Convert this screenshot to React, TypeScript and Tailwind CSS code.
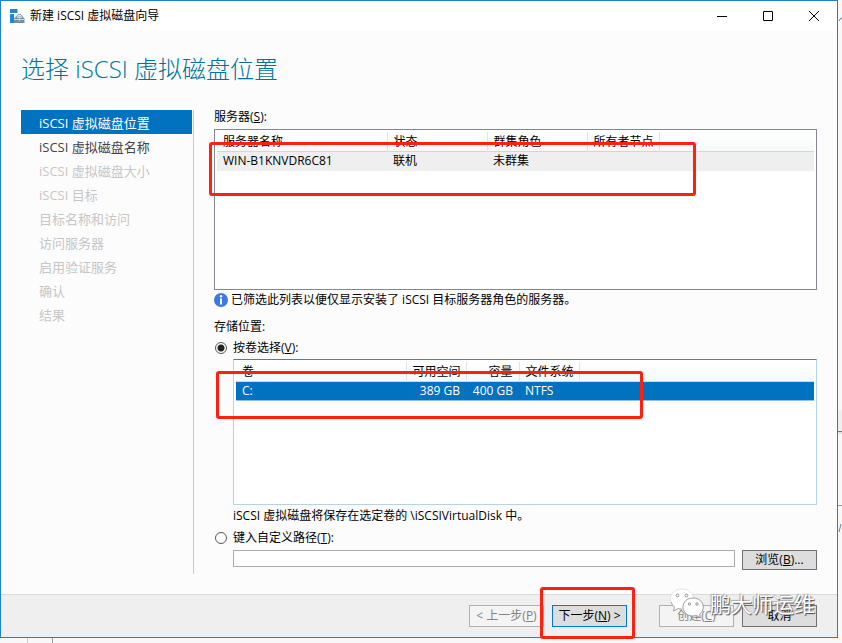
import React, { useState } from 'react';
import clsx from 'clsx';

type StepState = 'current' | 'available' | 'disabled';

const STEPS: { label: string; state: StepState }[] = [
  { label: 'iSCSI 虚拟磁盘位置', state: 'current' },
  { label: 'iSCSI 虚拟磁盘名称', state: 'available' },
  { label: 'iSCSI 虚拟磁盘大小', state: 'disabled' },
  { label: 'iSCSI 目标', state: 'disabled' },
  { label: '目标名称和访问', state: 'disabled' },
  { label: '访问服务器', state: 'disabled' },
  { label: '启用验证服务', state: 'disabled' },
  { label: '确认', state: 'disabled' },
  { label: '结果', state: 'disabled' },
];

const SERVERS = [{ name: 'WIN-B1KNVDR6C81', status: '联机', role: '未群集', owner: '' }];
const VOLUMES = [{ name: 'C:', free: '389 GB', size: '400 GB', fs: 'NTFS' }];

const WizardIcon: React.FC = () => (
  <svg width="15" height="15" viewBox="0 0 15 15" aria-hidden="true">
    <path d="M0 0h7.500v4H0zM0 5h4v9H0z" fill="#1e86d6" />
    <path d="M4 14V9.500l2-2h6.500l2 2V14z" fill="#7291a5" />
    <path d="M6.500 7.500l1.500-1.800h3l1.500 1.800" stroke="#7291a5" fill="none" />
    <path d="M4 10.500h4M11 10.500h3.500M7 8.500h5" stroke="#dfe8ee" strokeWidth="0.800" fill="none" />
    <path d="M8.500 9.500h2v2h-2z" fill="#dfe8ee" />
  </svg>
);

const InfoIcon: React.FC = () => (
  <svg width="14" height="14" viewBox="0 0 14 14" aria-hidden="true" className="shrink-0">
    <circle cx="7" cy="7" r="7" fill="#3f78e0" />
    <circle cx="7" cy="3.300" r="1.200" fill="#fff" />
    <path d="M7 5.500v6" stroke="#fff" strokeWidth="2" />
  </svg>
);

const ChatBubbles: React.FC = () => (
  <svg width="36" height="34" viewBox="0 0 36 34" aria-hidden="true">
    <path d="M13 2C6 2 1.500 6.500 1.500 12c0 3.200 1.700 6 4 8L4.500 24l4.500-2.400c1.300.4 2.600.6 4 .6 7 0 11.500-4.500 11.500-10.200S20 2 13 2z" fill="#fff" stroke="#d4d4d4" strokeWidth="0.600" />
    <path d="M2 15c.8 2 2 3.700 3.500 5L4.500 24l4.500-2.400c1.300.4 2.600.6 4 .6" fill="none" stroke="#999" strokeWidth="0.800" />
    <path d="M24 11c-6 0-10 4-10 9s4 9 10 9c1.200 0 2.400-.2 3.500-.5l4 2.200-1-3.500c2.400-1.700 3.800-4.200 3.800-7.200 0-5-4.300-9-10.300-9z" fill="#fff" stroke="#8a8a8a" strokeWidth="0.800" />
    <g fill="#fff" stroke="#888" strokeWidth="0.900">
      <circle cx="8.500" cy="8.500" r="1.400" />
      <circle cx="17.500" cy="8.500" r="1.400" />
      <circle cx="20.500" cy="17" r="1.200" />
      <circle cx="28" cy="17" r="1.200" />
    </g>
  </svg>
);

// Red frame drawn over a part of the dialog
const Highlight: React.FC<{ className: string }> = ({ className }) => (
  <div className={clsx('pointer-events-none absolute z-10 rounded-[3px] border-3 border-[#ff2012]', className)} />
);

const BUTTON = 'w-[75px] border text-center whitespace-nowrap leading-5';
const HEAD_ROW = 'border-b border-[#d5d5d5] bg-linear-to-b from-white to-[#f7f8f8]';
const HEAD_CELL = 'border-r border-[#e2e2e2] px-[6px] leading-[19px] font-normal whitespace-nowrap';
const RADIO =
  'size-3 shrink-0 appearance-none rounded-full border border-[#555] bg-white checked:bg-[radial-gradient(circle,#222_3px,#fff_4px)]';

const App: React.FC = () => {
  const [mode, setMode] = useState<'volume' | 'path'>('volume');
  const [path, setPath] = useState('');

  return (
    <div className="relative flex min-h-screen flex-col bg-[#f8f8f8] pr-1 pb-[5px] font-['Open_Sans','Noto_Sans_CJK_SC',sans-serif] text-xs text-black">
      {/* Edges of the window behind */}
      <svg className="absolute top-0 right-0" width="4" height="540" fill="none" aria-hidden="true">
        <path d="M1 21l2-3h1" stroke="#3a8fb5" />
        <path d="M0 410h4v21H0z" fill="#efefef" />
        <path d="M0 431.500h4" stroke="#777" />
        <path d="M0 433h4" stroke="#d0d0d0" />
        <path d="M0 505.500h4" stroke="#999" />
        <path d="M1 532l2-8" stroke="#667f99" />
      </svg>
      <div className="absolute bottom-0 left-[27px] h-[5px] w-px bg-[#ccc]" />
      <div className="absolute bottom-0 left-[52px] h-[5px] w-px bg-[#999]" />

      <div className="relative flex grow flex-col border border-[#1e80d0] bg-[#fcfcfc]">
        {/* Title bar */}
        <header className="flex h-[30px] items-center bg-white pr-[18px] pl-[9px]">
          <WizardIcon />
          <span className="ml-[5px] grow">新建 iSCSI 虚拟磁盘向导</span>
          <div className="flex gap-9">
            {[
              { label: '最小化', d: 'M0 5.500h10' },
              { label: '最大化', d: 'M.5.5h9v9h-9z' },
              { label: '关闭', d: 'M0 0l10 10M10 0L0 10' },
            ].map(b => (
              <button key={b.label} type="button" aria-label={b.label}>
                <svg width="10" height="10" viewBox="0 0 10 10" fill="none" stroke="#000">
                  <path d={b.d} />
                </svg>
              </button>
            ))}
          </div>
        </header>

        <h1 className="mt-5 pl-5 text-2xl leading-9 font-light text-[#00739c]">选择 iSCSI 虚拟磁盘位置</h1>

        <div className="mt-[23px] flex grow pr-5 pb-5 pl-5">
          {/* Steps */}
          <nav className="w-[173px] shrink-0 border-r border-[#c8c8c8] pr-px text-[13px]">
            {STEPS.map(s => (
              <a
                key={s.label}
                href="#"
                aria-disabled={s.state === 'disabled'}
                className={clsx(
                  'block h-6 pl-[18px] leading-[26px]',
                  s.state === 'current' && 'bg-[#0072bf] text-white',
                  s.state === 'available' && 'text-[#444]',
                  s.state === 'disabled' && 'text-[#c6c6c6]',
                )}
              >
                {s.label}
              </a>
            ))}
          </nav>

          <main className="min-w-0 grow pl-5">
            <h2 className="leading-[14px]">服务器(<u>S</u>):</h2>

            <div className="relative mt-[5px] h-[161px] border border-[#828790] bg-white p-0.5">
              <table className="w-full table-fixed border-collapse text-left">
                <colgroup>
                  <col className="w-[170px]" />
                  <col className="w-[100px]" />
                  <col className="w-[100px]" />
                  <col className="w-[72px]" />
                  <col />
                </colgroup>
                <thead>
                  <tr className={HEAD_ROW}>
                    <th className={HEAD_CELL}>服务器名称</th>
                    <th className={HEAD_CELL}>状态</th>
                    <th className={HEAD_CELL}>群集角色</th>
                    <th className={HEAD_CELL}>所有者节点</th>
                    <td />
                  </tr>
                </thead>
                <tbody>
                  {SERVERS.map(s => (
                    <tr key={s.name} className="h-[19px] bg-[#efefef]">
                      <td className="px-[6px]">{s.name}</td>
                      <td className="px-[6px]">{s.status}</td>
                      <td className="px-[6px]">{s.role}</td>
                      <td className="px-[6px]">{s.owner}</td>
                      <td />
                    </tr>
                  ))}
                </tbody>
              </table>
              <Highlight className="top-3 -left-1.5 h-[54px] w-[487px]" />
            </div>

            <p className="flex items-center gap-[3px] leading-5">
              <InfoIcon />
              已筛选此列表以便仅显示安装了 iSCSI 目标服务器角色的服务器。
            </p>

            <h2 className="mt-[9px] leading-4">存储位置:</h2>
            <label className="mt-[5px] flex items-center gap-[6px] pl-px leading-4">
              <input type="radio" name="mode" className={RADIO} checked={mode === 'volume'} onChange={() => setMode('volume')} />
              <span>按卷选择(<u>V</u>):</span>
            </label>

            <div className="relative mt-[3px] ml-[19px] h-[146px] border border-[#b2d4e6] border-t-[#4580b0] bg-white p-0.5">
              <table className="w-full table-fixed border-collapse text-left">
                <colgroup>
                  <col className="w-[170px]" />
                  <col className="w-[60px]" />
                  <col className="w-[53px]" />
                  <col className="w-[60px]" />
                  <col />
                </colgroup>
                <thead>
                  <tr className={HEAD_ROW}>
                    <th className={HEAD_CELL}>卷</th>
                    <th className={clsx(HEAD_CELL, 'text-right')}>可用空间</th>
                    <th className={clsx(HEAD_CELL, 'text-right')}>容量</th>
                    <th className={HEAD_CELL}>文件系统</th>
                    <td />
                  </tr>
                </thead>
                <tbody>
                  {VOLUMES.map(v => (
                    <tr key={v.name} className="h-[19px] border-b border-[#8ec1ea] bg-[#0072bf] text-white">
                      <td className="px-[6px]">{v.name}</td>
                      <td className="px-[6px] text-right whitespace-nowrap">{v.free}</td>
                      <td className="px-[6px] text-right whitespace-nowrap">{v.size}</td>
                      <td className="px-[6px]">{v.fs}</td>
                      <td />
                    </tr>
                  ))}
                </tbody>
              </table>
              <Highlight className="top-[11px] -left-[18px] h-12 w-[427px]" />
            </div>

            <p className="mt-[3px] ml-[19px] leading-4">iSCSI 虚拟磁盘将保存在选定卷的 \iSCSIVirtualDisk 中。</p>
            <label className="mt-[6px] flex items-center gap-[6px] pl-px leading-4">
              <input type="radio" name="mode" className={RADIO} checked={mode === 'path'} onChange={() => setMode('path')} />
              <span>键入自定义路径(<u>T</u>):</span>
            </label>
            <div className="mt-1 ml-[19px] flex items-start gap-[7px]">
              <input
                type="text"
                aria-label="键入自定义路径"
                value={path}
                onChange={e => setPath(e.target.value)}
                className="h-[17px] min-w-0 grow border border-[#abadb3] bg-white px-1"
              />
              <button type="button" className="h-5 w-[75px] border border-[#707070] bg-[#ddd] leading-4">
                浏览(<u>B</u>)...
              </button>
            </div>
          </main>
        </div>

        {/* Footer */}
        <footer className="relative flex justify-end border-t border-[#dadada] bg-[#efefef] py-[10px] pr-5">
          <button type="button" disabled className={clsx(BUTTON, 'border-[#adb2b5] bg-[#f4f4f4] text-[#838383]')}>
            &lt; 上一步(<u>P</u>)
          </button>
          <div className="relative ml-2">
            <button type="button" className={clsx(BUTTON, 'border-[#0078d7] bg-[#ddd]')}>
              下一步(<u>N</u>) &gt;
            </button>
            <Highlight className="-top-[18px] -left-3 h-[52px] w-[95px]" />
          </div>
          <button type="button" disabled className={clsx(BUTTON, 'ml-8 border-[#adb2b5] bg-[#f4f4f4] text-[#838383]')}>
            创建(<u>C</u>)
          </button>
          <button type="button" className={clsx(BUTTON, 'ml-2 border-[#707070] bg-[#ddd]')}>取消</button>

          {/* Watermark */}
          <div className="pointer-events-none absolute -top-2 right-[22px] flex items-center gap-[5px] text-[21px] leading-6 whitespace-nowrap text-white [text-shadow:1px_1px_1px_#444,-1px_-1px_1px_#aaa]">
            <ChatBubbles />
            鹏大师运维
          </div>
        </footer>
      </div>
    </div>
  );
};

export default App;
